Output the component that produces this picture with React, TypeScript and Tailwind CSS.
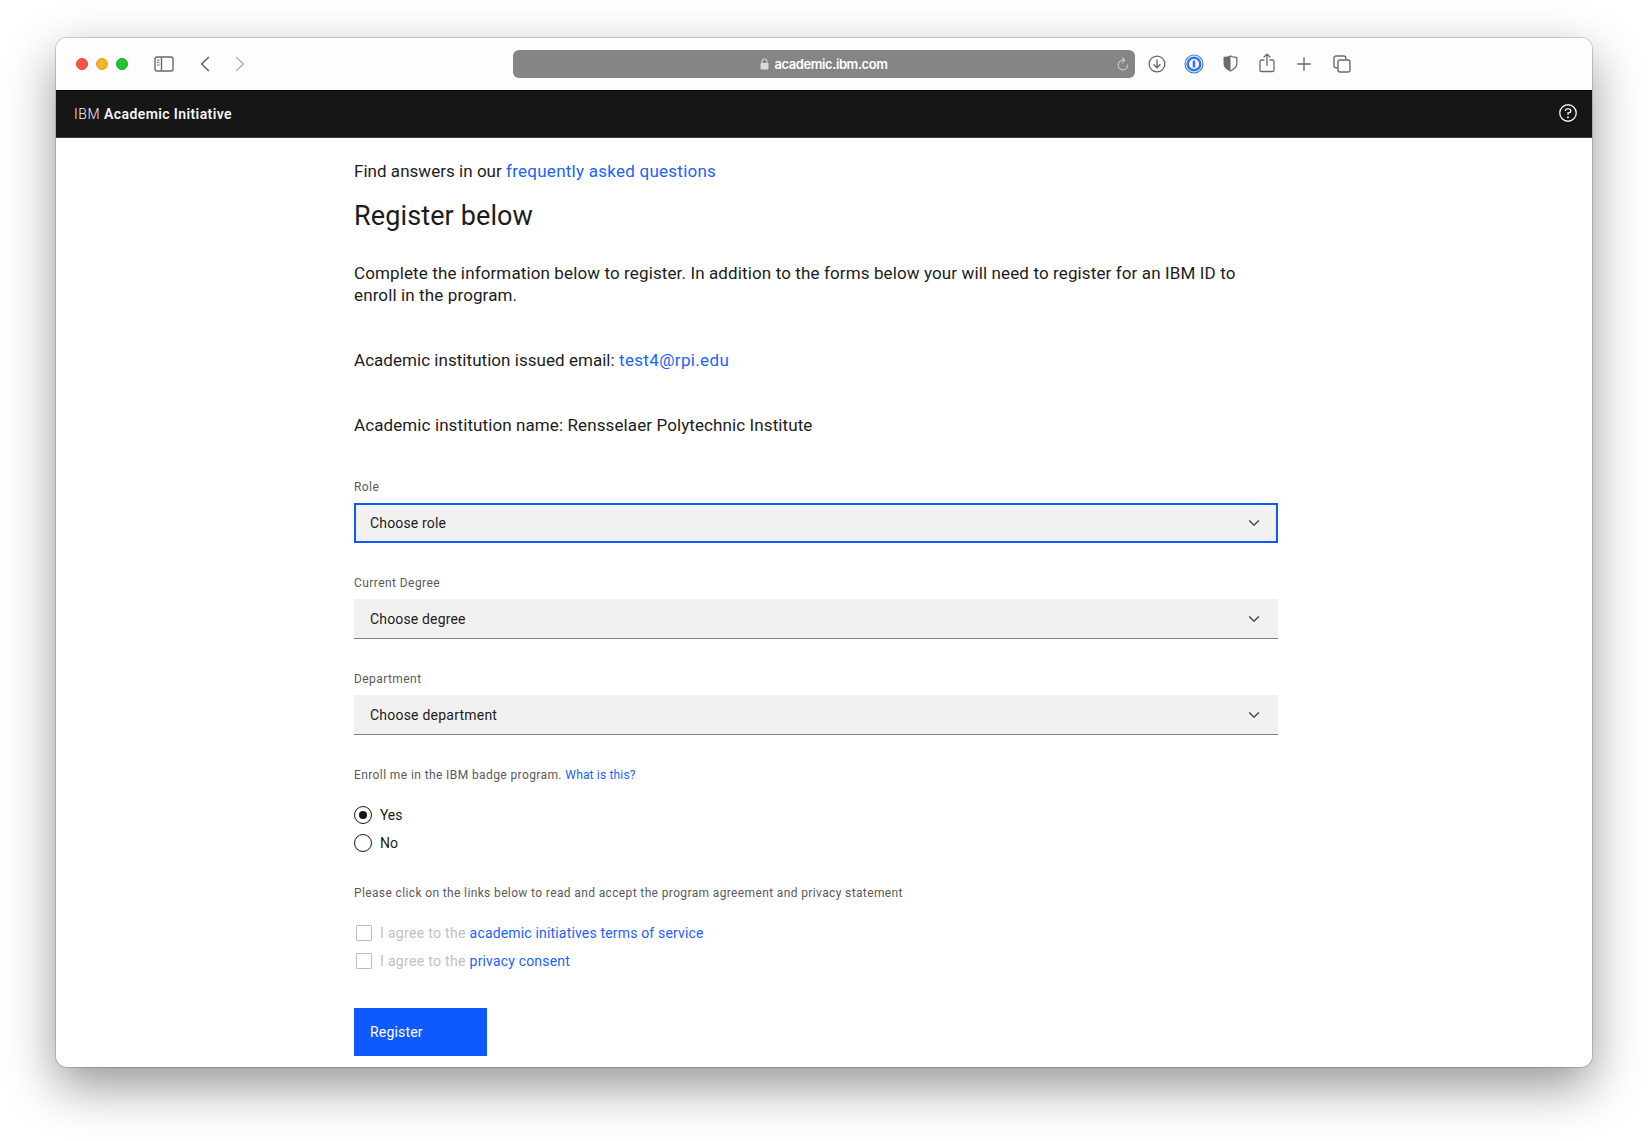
import type { ReactNode } from "react";

function SidebarIcon() {
  return (
    <svg width="20" height="16" viewBox="0 0 20 16" fill="none" stroke="#6b6b6b" strokeWidth="1.4">
      <rect x="1" y="1" width="18" height="14" rx="1.8" />
      <path d="M7.5 1v14" />
      <path d="M3 4.2h2.4M3 6.6h2.4M3 9h2.4" strokeWidth="1" />
    </svg>
  );
}

function Chevron({ direction, color }: { direction: "left" | "right"; color: string }) {
  return (
    <svg width="10" height="16" viewBox="0 0 10 16" fill="none" stroke={color} strokeWidth="1.7" strokeLinecap="round" strokeLinejoin="round">
      <path d={direction === "left" ? "M8.4 1.5 1.6 8l6.8 6.5" : "M1.6 1.5 8.4 8l-6.8 6.5"} />
    </svg>
  );
}

function LockIcon() {
  return (
    <svg width="9" height="12" viewBox="0 0 9 12">
      <path d="M2.1 6V3.4a2.4 2.4 0 0 1 4.8 0V6" fill="none" stroke="#cfcfcf" strokeWidth="1.2" />
      <rect x="0.5" y="5" width="8" height="6.6" rx="1" fill="#dadada" />
    </svg>
  );
}

function ReloadIcon() {
  return (
    <svg width="12" height="14" viewBox="0 0 12 14" fill="none" stroke="#c8c8c8" strokeWidth="1.2" strokeLinecap="round" strokeLinejoin="round">
      <path d="M10.7 7.9A4.8 4.8 0 1 1 6 3.2h1.3" />
      <path d="M5.4.9 7.8 3.2 5.4 5.6" />
    </svg>
  );
}

function DownloadIcon() {
  return (
    <svg width="18" height="18" viewBox="0 0 18 18" fill="none" stroke="#676767" strokeWidth="1.3" strokeLinecap="round" strokeLinejoin="round">
      <circle cx="9" cy="9" r="7.9" />
      <path d="M9 5v7.6M6 9.8l3 2.9 3-2.9" />
    </svg>
  );
}

function PasswordIcon() {
  return (
    <svg width="20" height="20" viewBox="0 0 20 20" fill="none" stroke="#3478e5">
      <circle cx="10" cy="10" r="9" strokeWidth="1.1" />
      <circle cx="10" cy="10" r="6.3" strokeWidth="2.6" />
      <path d="M10 6.6v6.8" strokeWidth="2.6" />
    </svg>
  );
}

function ShieldIcon() {
  return (
    <svg width="15" height="17" viewBox="0 0 15 17">
      <path d="M7.5 1C5.9 2.1 3.4 2.4 1.2 2.5v6.3c0 3.6 3 5.6 6.3 7.2 3.3-1.6 6.3-3.6 6.3-7.2V2.5C11.6 2.4 9.1 2.1 7.5 1Z" fill="none" stroke="#6b6b6b" strokeWidth="1.3" strokeLinejoin="round" />
      <path d="M7.5 1C5.9 2.1 3.4 2.4 1.2 2.5v6.3c0 3.6 3 5.6 6.3 7.2Z" fill="#6b6b6b" />
    </svg>
  );
}

function ShareIcon() {
  return (
    <svg width="16" height="20" viewBox="0 0 16 20" fill="none" stroke="#6b6b6b" strokeWidth="1.3" strokeLinecap="round" strokeLinejoin="round">
      <path d="M5 7H2.6A1.6 1.6 0 0 0 1 8.6v8.3a1.6 1.6 0 0 0 1.6 1.6h10.8a1.6 1.6 0 0 0 1.6-1.6V8.6A1.6 1.6 0 0 0 13.4 7H11" />
      <path d="M8 12.3V1.2M4.9 4.1 8 1.1l3.1 3" />
    </svg>
  );
}

function PlusIcon() {
  return (
    <svg width="14" height="14" viewBox="0 0 14 14" fill="none" stroke="#6b6b6b" strokeWidth="1.4" strokeLinecap="round">
      <path d="M7 .8v12.4M.8 7h12.4" />
    </svg>
  );
}

function TabsIcon() {
  return (
    <svg width="18" height="18" viewBox="0 0 18 18" fill="none" stroke="#6b6b6b" strokeWidth="1.4">
      <rect x="5" y="5" width="12" height="12" rx="2" />
      <path d="M4.8 12.8H3a2 2 0 0 1-2-2V3a2 2 0 0 1 2-2h7.8a2 2 0 0 1 2 2v1.8" />
    </svg>
  );
}

function HelpIcon() {
  return (
    <svg width="18" height="18" viewBox="0 0 18 18" fill="none" stroke="#f4f4f4" strokeWidth="1.3">
      <circle cx="9" cy="9" r="8.25" />
      <path d="M6.4 7.1V6.7A1.9 1.9 0 0 1 8.3 4.9h1.5a1.95 1.95 0 0 1 0 3.9H9v2" />
      <circle cx="9" cy="13.2" r="0.95" fill="#f4f4f4" stroke="none" />
    </svg>
  );
}

function Toolbar() {
  return (
    <div className="flex h-[52px] shrink-0 items-center bg-[#fdfdfd] pl-5">
      <div className="flex w-[437px] items-center">
        <div className="flex gap-2">
          <span className="size-3 rounded-full border border-[#e0443e] bg-[#fe5049]" />
          <span className="size-3 rounded-full border border-[#dea123] bg-[#fdb124]" />
          <span className="size-3 rounded-full border border-[#1aab29] bg-[#24c138]" />
        </div>
        <div className="-mt-px ml-[26px]"><SidebarIcon /></div>
        <div className="ml-[26px]"><Chevron direction="left" color="#666666" /></div>
        <div className="ml-[25px]"><Chevron direction="right" color="#b7b7b7" /></div>
      </div>
      <div className="flex h-7 w-[622px] items-center rounded-[6px] bg-[#858585] pr-1.5">
        <div className="flex flex-1 items-center justify-center gap-[5px] pl-[18px]">
          <LockIcon />
          <span className="font-['Inter',sans-serif] text-[13px] leading-[18px] font-semibold tracking-[-0.42px] text-white">academic.ibm.com</span>
        </div>
        <ReloadIcon />
      </div>
      <div className="-mt-px flex items-center">
        <div className="ml-[13px]"><DownloadIcon /></div>
        <div className="ml-[18px]"><PasswordIcon /></div>
        <div className="ml-[19px]"><ShieldIcon /></div>
        <div className="-mt-[2px] ml-[21px]"><ShareIcon /></div>
        <div className="ml-[22px]"><PlusIcon /></div>
        <div className="ml-[22px]"><TabsIcon /></div>
      </div>
    </div>
  );
}

function Header() {
  return (
    <header className="flex h-12 shrink-0 items-center justify-between border-t border-b border-t-black border-b-[#393939] bg-[#161616] pr-[15px] pl-[18px] text-[14px] leading-5 text-[#f4f4f4]">
      <p>
        <span className="font-light tracking-[0.55px]">IBM </span>
        <span className="font-semibold tracking-[0.4px]">Academic Initiative</span>
      </p>
      <div className="pb-[2px]"><HelpIcon /></div>
    </header>
  );
}

function Link({ children, className }: { children: ReactNode; className: string }) {
  return <a href="#" className={`text-[#1c62fe] ${className}`}>{children}</a>;
}

function SelectField({ label, value, focused, valueClass }: { label: string; value: string; focused?: boolean; valueClass: string }) {
  return (
    <div className="mb-8">
      <p className="mb-2 text-[12px] leading-4 tracking-[0.43px] text-[#5a5a5a]">{label}</p>
      <div
        className={`flex h-10 items-center justify-between bg-[#f1f1f1] ${
          focused ? "border-2 border-[#0f5aff] pr-[15px] pl-[14px]" : "border-b border-[#808080] pt-px pr-[17px] pl-4"
        }`}
      >
        <span className={`text-[14px] leading-5 ${valueClass}`}>{value}</span>
        <svg width="14" height="8" viewBox="0 0 14 8" fill="none" stroke="#333333" strokeWidth="1.2">
          <path d="M2.2 1.5 7 6.2l4.8-4.7" />
        </svg>
      </div>
    </div>
  );
}

function Radio({ label, checked }: { label: string; checked?: boolean }) {
  return (
    <div className="flex h-[18px] items-center gap-2">
      <span className="flex size-[18px] items-center justify-center rounded-full border border-[#161616]">
        {checked && <span className="size-2 rounded-full bg-[#161616]" />}
      </span>
      <span className="text-[14px] leading-[18px] tracking-[-0.1px]">{label}</span>
    </div>
  );
}

function Agreement({ link }: { link: string }) {
  return (
    <div className="flex h-4 items-center pl-0.5">
      <span className="size-4 rounded-[1px] border border-[#bcbcbc]" />
      <p className="ml-2 text-[14px] leading-4 text-[#c1c1c1]">
        <span className="tracking-[0.32px]">I agree to the </span>
        <Link className="tracking-[0.17px]">{link}</Link>
      </p>
    </div>
  );
}

export default function App() {
  return (
    <div className="flex h-[1141px] w-[1648px] justify-center overflow-hidden bg-white pt-[38px] font-['Roboto',sans-serif]">
      <div className="flex h-[1029px] w-[1536px] flex-col overflow-hidden rounded-[11px] bg-white shadow-[0_0_0_1px_rgba(0,0,0,0.17),0_19px_50px_rgba(0,0,0,0.42)]">
        <Toolbar />
        <Header />
        <main className="ml-[298px] w-[924px] pt-[22px] text-[17px] leading-[22px] text-[#1c1c1c]">
          <p>
            <span className="tracking-[0.03px]">Find answers in our </span>
            <Link className="tracking-[0.25px]">frequently asked questions</Link>
          </p>
          <h1 className="mt-4 text-[27px] leading-9 tracking-[0.12px]">Register below</h1>
          <p className="mt-7 tracking-[0.12px]">
            Complete the information below to register. In addition to the forms below your will need to register for an IBM ID to
            <br />
            enroll in the program.
          </p>
          <p className="mt-[43px]">
            <span className="tracking-[0.04px]">Academic institution issued email: </span>
            <Link className="tracking-[0.35px]">test4@rpi.edu</Link>
          </p>
          <p className="mt-[43px] mb-[43px] tracking-[0.1px]">Academic institution name: Rensselaer Polytechnic Institute</p>

          <SelectField label="Role" value="Choose role" focused valueClass="tracking-[0.16px]" />
          <SelectField label="Current Degree" value="Choose degree" valueClass="tracking-[0.16px]" />
          <SelectField label="Department" value="Choose department" valueClass="tracking-[0.22px]" />

          <p className="text-[12px] leading-4 text-[#5a5a5a]">
            <span className="tracking-[0.4px]">Enroll me in the IBM badge program. </span>
            <Link className="tracking-[0.17px]">What is this?</Link>
          </p>
          <div className="mt-[23px] flex flex-col gap-2.5">
            <Radio label="Yes" checked />
            <Radio label="No" />
          </div>

          <p className="mt-[33px] text-[12px] leading-4 tracking-[0.37px] text-[#5a5a5a]">
            Please click on the links below to read and accept the program agreement and privacy statement
          </p>
          <div className="mt-6 flex flex-col gap-3">
            <Agreement link="academic initiatives terms of service" />
            <Agreement link="privacy consent" />
          </div>

          <button className="mt-[39px] flex h-12 w-[133px] items-center bg-[#0f5aff] pl-4 text-[14px] leading-5 tracking-[0.18px] text-white">
            Register
          </button>
        </main>
      </div>
    </div>
  );
}
